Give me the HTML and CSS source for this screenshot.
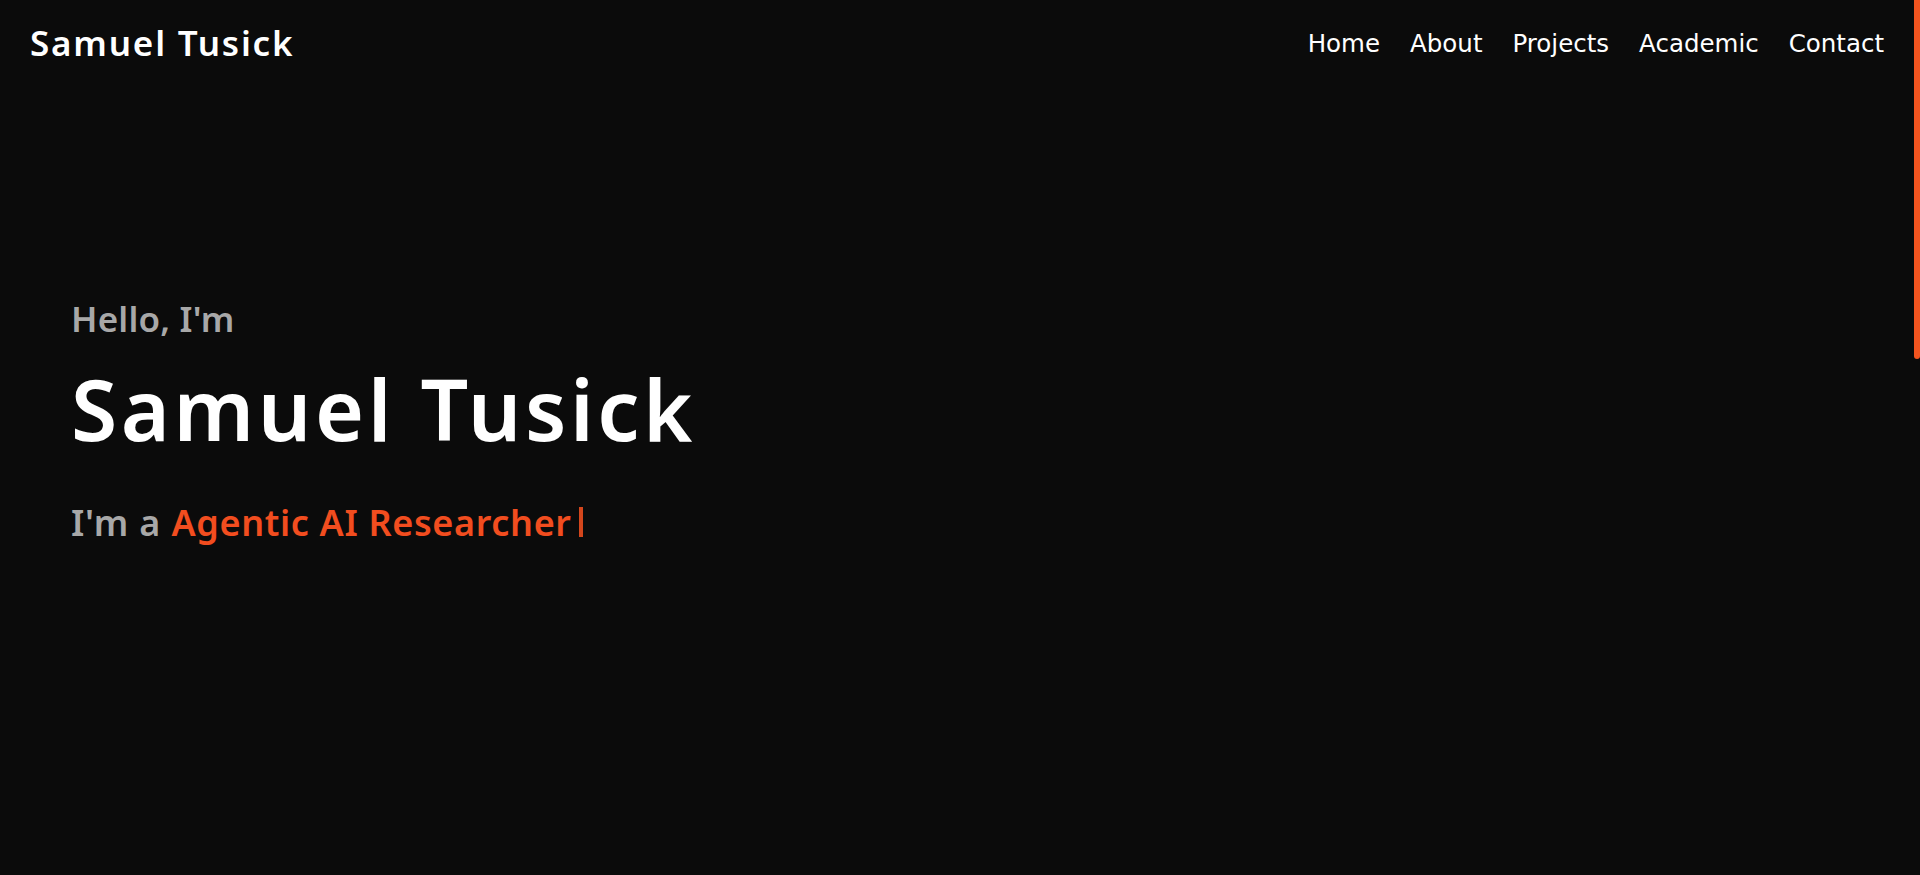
FILE: index.html
```html
<!DOCTYPE html>
<html lang="en">
<head>
<meta charset="utf-8">
<title>Samuel Tusick</title>
<link rel="stylesheet" href="styles.css">
</head>
<body>
<header class="site-header">
  <a class="logo" href="#">Samuel Tusick</a>
  <nav class="nav">
    <a href="#">Home</a>
    <a href="#">About</a>
    <a href="#">Projects</a>
    <a href="#">Academic</a>
    <a href="#">Contact</a>
  </nav>
</header>
<main>
  <section class="hero">
    <div class="hero-content">
      <p class="hero-greeting">Hello, I'm</p>
      <h1 class="hero-name">Samuel Tusick</h1>
      <p class="hero-tagline"><span>I'm a</span> <span class="hero-role">Agentic AI Researcher</span><span class="cursor"></span></p>
    </div>
  </section>
</main>
<div class="scroll-thumb" aria-hidden="true"></div>
</body>
</html>
```
FILE: styles.css
```css
* { box-sizing: border-box; }
html { background: #0b0b0b; }
body {
  margin: 0;
  background: #0b0b0b;
  color: #fff;
  font-family: "Noto Sans", "DejaVu Sans", sans-serif;
}
a { color: inherit; text-decoration: none; }
.site-header {
  height: 86px;
  padding: 0 36px 0 30px;
  display: flex;
  align-items: center;
  justify-content: space-between;
}
.logo { font-size: 35px; font-weight: 600; letter-spacing: 1.8px; line-height: 1.2; }
.nav { display: flex; gap: 30px; padding-top: 1px; }
.nav a { font-family: "DejaVu Sans", sans-serif; font-size: 24.5px; font-weight: 400; line-height: 1.2; }
.hero {
  min-height: 789px;
  padding: 212px 72px 0 71px;
}
.hero-content { display: flex; flex-direction: column; align-items: flex-start; }
.hero-greeting { margin: 0; font-size: 35px; font-weight: 600; line-height: 1.2; letter-spacing: 0.2px; color: #a8a8a8; }
.hero-name { margin: 19px 0 0; font-size: 84px; font-weight: 600; line-height: 1.2; letter-spacing: 3.6px; color: #fff; }
.hero-tagline { margin: 41.6px 0 0; font-size: 36px; font-weight: 600; line-height: 1.2; letter-spacing: 0.8px; color: #a8a8a8; white-space: nowrap; }
.hero-role { color: #f24d1f; letter-spacing: 0.65px; }
.cursor { display: inline-block; width: 4px; height: 30px; background: #d4461c; margin-left: 7px; vertical-align: -1px; }
.scroll-thumb { position: fixed; top: 0; right: 0; width: 6px; height: 359px; background: #f2541f; border-radius: 0 0 3px 3px; }
```
